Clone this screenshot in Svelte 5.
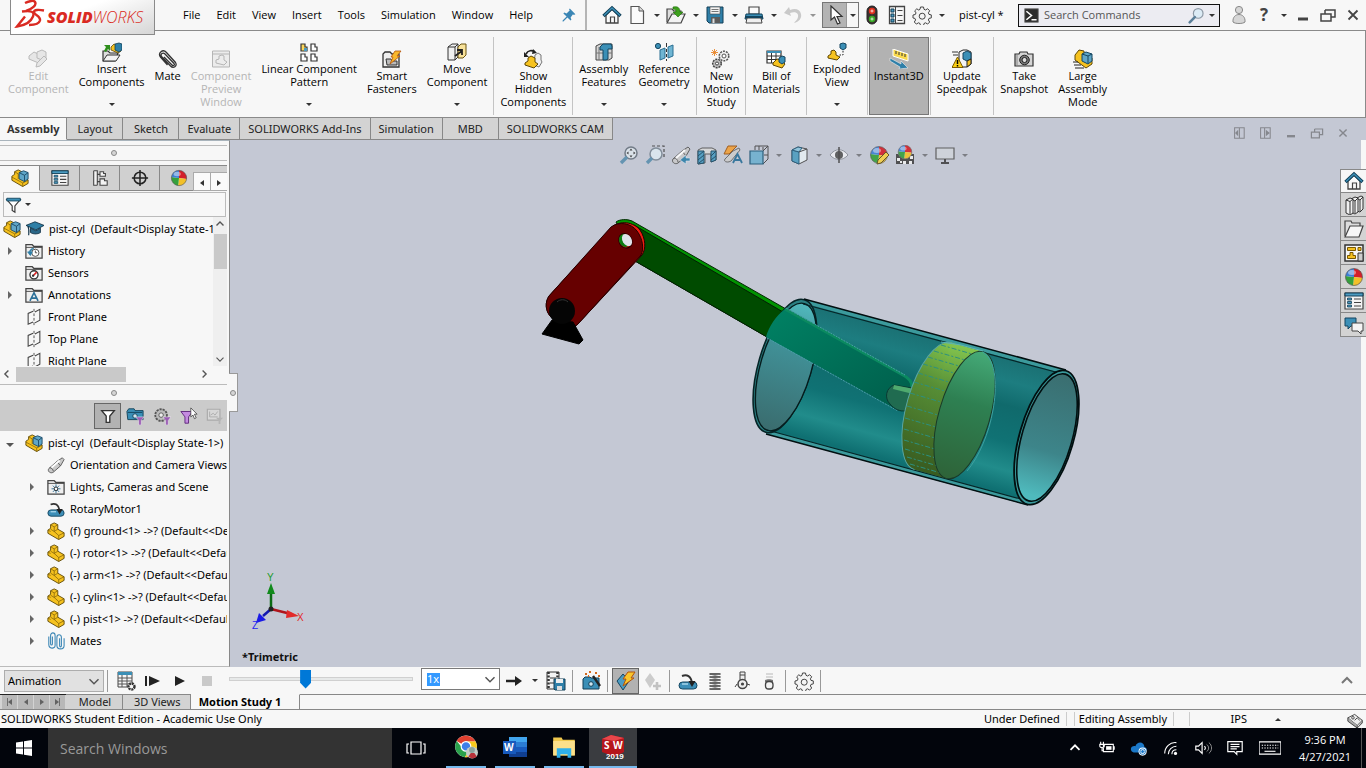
<script>
    // Inner markup of every icon, drawn on a 20 x 20 grid
    const cube = '<path d="M9 4l5-2 5 2v7l-4 3-6-3z" fill="#5fa6c8" stroke="#1b4a66"/><path d="M9 4l6 3 4-3M15 7v7" fill="none" stroke="#1b4a66"/>';
    const bracket = '<path d="M4 3l4-2 4 2v5l7 4v4l-6 3.500-12-7V9l3-2z" fill="#f6c21f" stroke="#5e4704"/><path d="M4 3l4 2.500L12 3M8 5.500v5l-4-2.500M1 9l3 1.500M8 10.500l5 4.500 6-3M13 15v4.500M8 10.500l4-2.500" fill="none" stroke="#7d5f08" stroke-width=".8"/>';
    const assembly = '<path d="M1 8l3-2V3l4-2 4 2v6l7 3v4l-6 3.500-12-7z" fill="#f6c21f" stroke="#5e4704"/><path d="M1 9l12 6.500 6-3M13 15.500v4M4 3l4 2.500V11" fill="none" stroke="#7d5f08" stroke-width=".8"/>' + cube;
    const funnel = '<path d="M2 4h15l-6 7v7l-3-2v-5z" fill="#fff" stroke="#3a3a3a" stroke-width="1.3"/>';
    const folder = '<path d="M1 18V3h7l2 2h9v13z" fill="#efefef" stroke="#444" stroke-width="1.4"/><path d="M1 6h18" stroke="#444"/>';
    const gearPath = '<path d="M8.5 2h3l.5 2.3 1.6.7 2-1.3 2.1 2.1-1.3 2 .6 1.600 2.300.5v3l-2.300.5-.6 1.600 1.300 2-2.100 2.100-2-1.300-1.600.7-.5 2.300h-3l-.5-2.300-1.600-.7-2 1.300-2.100-2.100 1.300-2-.7-1.600L1 13v-3l2.300-.5.7-1.600-1.300-2 2.100-2.100 2 1.300L8 4.300z"';
    const ball = '<circle cx="10" cy="10" r="8.500" fill="#e8e8e8"/><path d="M10 10V1.500A8.500 8.500 0 0 1 18.500 11z" fill="#d3202a"/><path d="M10 10l8.500 1A8.500 8.500 0 0 1 9 18.500z" fill="#f2c029"/><path d="M10 10l-1 8.500A8.500 8.500 0 0 1 1.500 9z" fill="#35a03c"/><path d="M10 10L1.500 9A8.500 8.500 0 0 1 10 1.500z" fill="#3d7fd6"/><ellipse cx="8" cy="5.500" rx="4" ry="2.500" fill="#fff" opacity=".45"/><circle cx="10" cy="10" r="8.500" fill="none" stroke="#555" stroke-width=".7"/>';
    const camera = '<path d="M1 5l2-3h6l1 2h9v10H2z" fill="#3a8fb7" stroke="#123f57"/><path d="M2 6h16" stroke="#123f57"/><circle cx="10" cy="10" r="2.500" fill="#cfe6f0" stroke="#123f57"/>';
    const miniFunnel = '<path d="M11 11h9l-3 4v5h-3v-5z" fill="#9a5cb4" stroke="#eee" stroke-width=".6"/>';
    const gear = gearPath + ' fill="#f4f4f4" stroke="#444"/><circle cx="10.200" cy="11.200" r="3" fill="none" stroke="#444"/>';
    const flashlight = '<path d="M2 14L11 6l6-4 2 2-4 7-8 7c-3 2-7-1-5-4z" fill="#c9c9c9" stroke="#555"/><path d="M11 6l4 5M3 13c2 0 4 2 4 4" stroke="#555" fill="none"/><path d="M5 13l9-8" stroke="#fff" stroke-width="2"/>';
    const disk = '<path d="M2 2h16v16H4l-2-2z" fill="#2f7fa8" stroke="#123f57"/><path d="M5 2h10v7H5z" fill="#f3f3f3" stroke="#444" stroke-width=".6"/><path d="M6.500 4.500h7M6.500 6.500h7" stroke="#777"/><path d="M6 12h9v6H6z" fill="#5b5b5b"/><path d="M7.500 13.500h2V18h-2z" fill="#ddd"/>';
    const bolt = '<path d="M12 1h7l-4 6h3L7 15l3-7H7z" fill="#f9c62c" stroke="#b45309"/>';
    const house = '<path d="M4 10v8h12v-8l-6-6z" fill="#fafafa" stroke="#444" stroke-width="1.300"/><path d="M8.500 18v-6h4v6" fill="none" stroke="#444" stroke-width="1.200"/><path d="M1.500 11L10 3l8.500 8" fill="none" stroke="#123f57" stroke-width="3.400"/><path d="M2 10.500L10 3l8 7.500" fill="none" stroke="#3b8fb6" stroke-width="1.400"/>';
    const bins = '<path d="M1 2h18v16H1z" fill="#f4f4f4" stroke="#444" stroke-width="1.200"/><path d="M1 2h18v3H1z" fill="#4c9cc2" stroke="#123f57"/><path d="M3.500 7h4v2h-4zM3.500 10.500h4v2h-4zM3.500 14h4v2h-4z" fill="#4c9cc2" stroke="#123f57" stroke-width=".8"/><path d="M10 8h7M10 11.500h7M10 15h7" stroke="#444" stroke-width="1.200"/>';
    const motor = '<rect x="1" y="11" width="18" height="7" rx="3.500" fill="#3d8fb8" stroke="#14455f"/><path d="M4 13h6" stroke="#9fd0e6" stroke-width="1.600"/><path d="M4 5c5-2 9 0 10 7" fill="none" stroke="#333" stroke-width="2"/><path d="M10.500 10h7l-3.500 6z" fill="#222"/>';
    const plane = '<path d="M9 3.500L3.500 6v12L9 15.500M11 4.500l5.500-3v12l-5.500 3" fill="none" stroke="#444" stroke-width="1.200"/><path d="M10 1v3M10 6v3M10 11v3M10 16v3" stroke="#444"/>';
    const prompt = '<path d="M2 2h16v16H2z" fill="#2c2c2c" stroke="#777"/><path d="M4 5l6 5-6 5M10 15h6" fill="none" stroke="#fff" stroke-width="1.800"/>';

    const icons = {
        part: bracket,
        assembly,
        gear,
        ball,
        motor,
        plane,
        prompt,
        house,
        bins,
        disk,
        flashlight,
        filter: '<path d="M3 4h14l-5 6v7H8v-7z" fill="#fff" stroke="#333" stroke-width="1.500"/>',
        filterBlue: funnel + '<path d="M2 2.500h15v3H2z" fill="#3b8fb6" stroke="#14455f"/>',
        pin: '<path d="M11 2l7 7-2 1-1-1-3 4 1 3-1 1-4-4-5 5-1 0 0-1 5-5-4-4 1-1 3 1 4-4-1-1z" fill="#3b86b5"/>',
        page: '<path d="M4 1.500h8l4.500 4.500v12.500H4z" fill="#fafafa" stroke="#555" stroke-width="1.200"/><path d="M12 1.500V6h4.500" fill="#ddd" stroke="#555"/>',
        open: '<path d="M1 17V4h5l2 2h7v4" fill="#ddd" stroke="#444" stroke-width="1.200"/><path d="M1 18L6 9h13l-4 9z" fill="#f3f3f3" stroke="#444" stroke-width="1.200"/><path d="M7 2c5-1 7 1 7 5h3l-5 5-5-5h3c0-2-1-3-3-3z" fill="#3ea01e" stroke="#1f6d08" stroke-width=".6"/>',
        print: '<path d="M5 2h10v7H5z" fill="#fafafa" stroke="#444" stroke-width="1.200"/><path d="M2 9h16l1 5H1z" fill="#3b8fb6" stroke="#14455f"/><path d="M3 13h14l1 5H2z" fill="#f0f0f0" stroke="#444"/><path d="M1 12h18" stroke="#14455f" stroke-width="2"/>',
        undo: '<path d="M6 2L1 8l7 3-1-3c5-2 9 0 8 4-.5 3-3 4-4 6 5-1 8-5 7-9C17 4 12 3 7 5z" fill="#c9c9c9"/>',
        cursor: '<path d="M6 1v14l3.500-3 3 7 2.500-1-3-6.500h5z" fill="#fff" stroke="#333" stroke-width="1.200"/>',
        traffic: '<rect x="5" y="1" width="10" height="18" rx="5" fill="#3a3030" stroke="#222"/><circle cx="10" cy="6" r="3.200" fill="#e0301e"/><circle cx="10" cy="14" r="3.200" fill="#38a825"/><path d="M8.500 6h3M10 4.500v3M8.500 14h3M10 12.500v3" stroke="#fff" opacity=".8"/>',
        list: '<path d="M2.500 1.500h15v17h-15z" fill="#f6f6f6" stroke="#444" stroke-width="1.300"/><path d="M8.500 2v16" stroke="#444"/><path d="M4 4h3v3H4zM4 9h3v3H4zM4 14h3v3H4z" fill="#4c9cc2" stroke="#123f57"/><path d="M10.500 5.500h5M10.500 10.500h5M10.500 15.500h5" stroke="#444"/>',
        search: '<circle cx="12" cy="7.500" r="5.700" fill="#dcebf5" stroke="#8d99a5" stroke-width="1.400"/><path d="M8 12l-6 6" stroke="#5b7f99" stroke-width="3" stroke-linecap="round"/>',
        user: '<circle cx="10" cy="5" r="3.600" fill="#d6d6d6" stroke="#888"/><path d="M4 17c-1-10 13-10 12 0-2 2-10 2-12 0z" fill="#d6d6d6" stroke="#888"/>',
        minimise: '<path d="M5 12.500h10v3H5z" fill="currentColor"/>',
        restore: '<path d="M7 5h10v7h-4M3 9h10v7H3zM7 5v4" fill="none" stroke="currentColor" stroke-width="1.500"/>',
        close: '<path d="M5.500 5.500l9 9M14.500 5.500l-9 9" stroke="currentColor" stroke-width="1.800"/>',
        editComponent: '<g fill="#e6e6e6" stroke="#b9b9b9"><path d="M1 7l5-4 4 2v3l7 3-4 4-12-5z"/><path d="M9 3l5-2 4 2v6l-4 2-5-2z"/><path d="M8 18l1-4 7-7 3 3-7 7z"/></g>',
        insertComponents: '<path d="M1 19V9h5l2 2h8l-3 8z" fill="#ddd" stroke="#333" stroke-width="1.200"/><path d="M1 19l4-6h13l-4 6z" fill="#f3f3f3" stroke="#333"/><path d="M2 9l2-4-2-2h6v6L6 7l-2 3z" fill="#2f8f1c"/><path d="M9 5l3-3 3 1v4l4 2-3 2-7-3z" fill="#f6c21f" stroke="#5e4704" stroke-width=".8"/><path d="M13 2l4-1 3 1v6l-3 2-4-2z" fill="#2e7fa6" stroke="#123f57" stroke-width=".8"/>',
        mate: '<path d="M6 8l8 8c1.500 1.500 3 0 2-1.500L7 5C5 3 2 5 3.500 7.500l9 9.500c3 3 7 0 5-3.500L8 3C5-.5-.5 4 2.500 8l7 8" fill="none" stroke="#333" stroke-width="1.300"/>',
        preview: '<g fill="#ececec" stroke="#b5b5b5"><path d="M1.500 2h17v16h-17z"/><path d="M1.500 5h17" /><path d="M5 11l3-1V7l3-1 2 1v4l3 2-3 3-8-2z"/></g>',
        linear: '<g fill="#fff" stroke="#333" stroke-width="1.200"><path d="M2 2h4v3h2v4H2z" fill="#fbd75c"/><path d="M12 2h4v3h2v4h-6zM2 12h4v3h2v4H2zM12 12h4v3h2v4h-6z"/></g><path d="M5 6h3v3H5z" fill="#4c9cc2"/>',
        fasteners: '<path d="M1 18V5l2-2h5l2 2h7v13z" fill="#eee" stroke="#333" stroke-width="1.300"/><path d="M4 10h5l1 2h5v4H5z" fill="#bbb" stroke="#333"/><path d="M13 2h6l-4 5h3L8 15l3-7H9z" fill="#f9b82c" stroke="#b4530a" stroke-width=".8"/>',
        move: '<path d="M1 5l4-3h6v13l-3 3H1z" fill="#f0f0f0" stroke="#333"/><path d="M1 5h7v13M8 5l3-3" fill="none" stroke="#333"/><path d="M11 5l3-3h5v11l-3 3h-5z" fill="#f8e29a" stroke="#6b5410"/><path d="M8 14l7-5M15 13V8h-5" fill="none" stroke="#222" stroke-width="1.800"/>',
        showHidden: '<path d="M12 6l3-2 3 2v5l1 2-3 5-5-2z" fill="#eee" stroke="#777"/><path d="M2 14l3-2V9l3-2 4 2v4l3 2-4 4-9-3z" fill="#f6c21f" stroke="#5e4704"/><path d="M3 5c2-4 6-4 9-2" fill="none" stroke="#222" stroke-width="1.700"/><path d="M1 3v5h5zM10 0l4 4-5 1z" fill="#222"/>',
        features: '<path d="M2 4l4-2h12v14l-3 2H2z" fill="#d5d5d5" stroke="#444"/><path d="M2 11h16M5 5v13" stroke="#777"/><path d="M6 5l3-3h8l1 2v3h-4v10l-2 1H9V8H6z" fill="#3b8fb6" stroke="#14455f"/>',
        geometry: '<circle cx="4" cy="4" r="2.600" fill="#3b8fb6" stroke="#14455f"/><path d="M6 8l5-2v10l-5 2zM14 5l5-2v11l-5 2z" fill="#6fb5d3" stroke="#2a6f92"/><path d="M12.500 1v4M12.500 7v3M12.500 12v3M12.500 17v2" stroke="#333"/>',
        motion: '<circle cx="13" cy="7" r="4.800" fill="#eee" stroke="#555" stroke-width="1.500" stroke-dasharray="2 1"/><circle cx="13" cy="7" r="2" fill="#fff" stroke="#555"/><circle cx="6" cy="14.500" r="4.300" fill="#bbb" stroke="#444" stroke-width="1.500" stroke-dasharray="2 1"/><circle cx="6" cy="14.500" r="1.500" fill="#fff" stroke="#444"/><path d="M3.500 0v7M0 3.500h7M1 1l5 5M6 1L1 6" stroke="#e8862a" stroke-width=".9"/>',
        bom: '<path d="M1 2h14v12H1z" fill="#fff" stroke="#333" stroke-width="1.200"/><path d="M1 2h14v2H1z" fill="#3b8fb6"/><path d="M1 7h14M1 10.500h14M5.500 4v10M10 4v10" stroke="#333"/><path d="M7 14l4-4 4 1 4 4-3 4-9-3z" fill="#f6c21f" stroke="#5e4704"/><path d="M13 9l3-2 3 1v5l-3 2-3-2z" fill="#3b8fb6" stroke="#14455f"/>',
        exploded: '<path d="M1 14l3-2v-3l3-1 2 2v3l4 2-3 3-9-2z" fill="#f6c21f" stroke="#5e4704"/><path d="M13 2l3-1 3 1v4l-3 2-3-2z" fill="#3b8fb6" stroke="#14455f"/><path d="M16 9v4h-4" fill="none" stroke="#222" stroke-dasharray="1.500 1.500"/>',
        instant: '<path d="M4 0l15 5v7L4 7z" fill="#f9d94e" stroke="#fff"/><path d="M7 2v3M10 3v3M13 4v3M16 5v3" stroke="#333"/><path d="M1 9l11 6v-3l7 7-9 1 1-2L1 12z" fill="#2f7fa8" stroke="#fff" stroke-width=".5"/>',
        speedpak: '<path d="M7 3l4-2h4l4 2v12l-4 3H7z" fill="#f3f3f3" stroke="#222"/><path d="M11 4l4-2 4 2v6l-4 2-4-2z" fill="#3b8fb6" stroke="#14455f"/><path d="M15 12l4-2v5l-4 3z" fill="#f6c21f" stroke="#222"/><path d="M0 3h6M1 6h5" stroke="#333"/><path d="M5.500 8L11 18.500H0z" fill="#fbd014" stroke="#7a5900"/><path d="M5.500 11v4M5.500 16v1.500" stroke="#000" stroke-width="1.500"/>',
        snapshot: '<path d="M1 5h4l1-2h7l1 2h5v12H1z" fill="#d5d5d5" stroke="#333" stroke-width="1.200"/><path d="M3 6v10" stroke="#888"/><circle cx="10.500" cy="11" r="4.800" fill="#777" stroke="#222"/><circle cx="10.500" cy="11" r="2.500" fill="#ddd" stroke="#222"/>',
        large: '<path d="M2 6l4-5 5 1v5l8 2v6l-6 4L2 11z" fill="#f6c21f" stroke="#5e4704"/><path d="M9 5l4-2 6 2v7l-4 3-6-3z" fill="#5fa6c8" stroke="#14455f"/><path d="M9 5l6 2 4-2M15 7v7" fill="none" stroke="#14455f"/><path d="M0 13h5M1 16h7M2 19h9" stroke="#222"/>',
        config: '<g fill="#f4f4f4" stroke="#444" stroke-width="1.200"><path d="M3 2h4v16M3 2v16h4M7 6h5M7 14h4"/><path d="M10 3h4v2h2v3h-6zM10 11h5v2h3v5h-8z"/></g>',
        target: '<circle cx="10" cy="10" r="6.500" fill="none" stroke="#222" stroke-width="1.700"/><path d="M10 1v18M1 10h18" stroke="#222" stroke-width="1.700"/>',
        cap: '<path d="M0 6l10-4 10 4-9 5z" fill="#2e7fa6" stroke="#14354a"/><path d="M5 9l6 3 5-3v5c-3 2-8 2-11 0z" fill="#2a6788" stroke="#14354a"/><path d="M2 7c2 3 1 7 1 10" fill="none" stroke="#14354a" stroke-width="1.300"/>',
        history: folder + '<circle cx="11.500" cy="12" r="4" fill="#fff" stroke="#444"/><path d="M11.500 9.500V12h2" stroke="#444" fill="none"/><path d="M5 12c0-4 3-5 5-5M3 11h5l-2 4z" fill="#2f7fa8" stroke="#2f7fa8"/>',
        sensors: folder + '<circle cx="10" cy="12" r="4.500" fill="#fff" stroke="#333" stroke-width="1.500"/><path d="M9 13l4-4" stroke="#d22" stroke-width="1.800"/><circle cx="9" cy="13" r="1.300" fill="#333"/>',
        annotations: folder + '<path d="M5.500 16.500L10 7.500l4.500 9M7 13.500h6" fill="none" stroke="#2a6f98" stroke-width="1.800"/>',
        lights: folder + '<path d="M10 7v10M5 12h10M6.500 8.500l7 7M13.500 8.500l-7 7" stroke="#2a6f98"/><circle cx="10" cy="12" r="2" fill="#fff" stroke="#222"/>',
        filterAnimated: camera + miniFunnel,
        filterDriving: '<circle cx="9" cy="9" r="6.500" fill="#bbb" stroke="#555" stroke-width="2" stroke-dasharray="2.500 1"/><circle cx="9" cy="9" r="2.500" fill="#eee" stroke="#555"/>' + miniFunnel,
        filterSelected: '<path d="M1 5h13l-4.500 6v7h-4v-7z" fill="#c48be0" stroke="#5a2378"/><path d="M12 1v10l2.500-2 1.500 4 2-1-2-4h3z" fill="#fff" stroke="#333" stroke-width=".8"/>',
        filterResults: '<path d="M1.500 2.500h14v12h-14z" fill="#d8d8d8" stroke="#aaa" stroke-width="1.300"/><path d="M4 5v6h9M5 9l3-2 2 2 3-4" fill="none" stroke="#aaa"/><path d="M11 12h8l-3 3v4h-2v-4z" fill="#b5b5b5"/>',
        mates: '<path d="M6 5v8c0 2-2 2-2 0V4c0-4 5-4 5 0v11c0 4-7 4-7-1V5M14 7v8c0 2 2 2 2 0V6c0-4-5-4-5 0v9c0 5 8 5 8 0V7" fill="none" stroke="#3b86b5" stroke-width="1.200"/>',
        calc: '<path d="M2 1h14v15H2z" fill="#f6f6f6" stroke="#444"/><path d="M2 1h14v3H2z" fill="#3b8fb6"/><path d="M2 7h14M2 10h14M2 13h14M6 4v12M11 4v12" stroke="#555"/><circle cx="15.500" cy="15.500" r="3" fill="#f7f7f7" stroke="#333" stroke-width="2.400" stroke-dasharray="2 .8"/>',
        playStart: '<path d="M3 5v10" stroke="#222" stroke-width="2"/><path d="M6 5l11 5-11 5z" fill="#222"/>',
        play: '<path d="M5 5l10 5-10 5z" fill="#222"/>',
        stop: '<path d="M5 5h10v10H5z" fill="#c9c9c9"/>',
        arrowRight: '<path d="M2 10h10" stroke="#222" stroke-width="2.500"/><path d="M11 5l7 5-7 5z" fill="#222"/>',
        film: '<path d="M1 1h12v17H1z" fill="#f3f3f3" stroke="#333"/><path d="M2.500 1v17M11.500 1v17" stroke="#333" stroke-width="2.500" stroke-dasharray="2 1.500"/><path d="M4 7h6M4 12h6" stroke="#333"/><path d="M8 8h11v11H9l-1-1z" fill="#2f7fa8" stroke="#123f57"/><path d="M10 8h7v4h-7z" fill="#eee"/><path d="M11 15h5v4h-5z" fill="#ddd"/>',
        wizard: '<path d="M2 8l2-2h5l1 1h8v11H2z" fill="#3a8fb7" stroke="#123f57"/><circle cx="10" cy="13" r="2.300" fill="#cfe6f0" stroke="#123f57"/><path d="M12 5l7 10" stroke="#222" stroke-width="2.400"/><path d="M4 3h2M8 1h2M14 2h2M17 5h2M7 5h1" stroke="#d2691e" stroke-width="1.800"/>',
        autokey: '<path d="M7 3l6 7-6 9-6-9z" fill="#4c9cc2" stroke="#14455f"/>' + bolt,
        addKey: '<path d="M7 2l5 7-5 8-5-8z" fill="#ccc"/><path d="M14 11v8M10 15h8" stroke="#c2c2c2" stroke-width="2.600"/>',
        spring: '<path d="M5 3h10M5 6h10M5 9h10M5 12h10M5 15h10M5 18h10" stroke="#333" stroke-width="1.500" stroke-linecap="round"/><path d="M15 3L5 6M15 6L5 9M15 9L5 12M15 12L5 15M15 15L5 18" stroke="#777" stroke-width=".8"/>',
        contact: '<path d="M8 1h5v8H8z" fill="#eee" stroke="#444"/><path d="M8 4h5" stroke="#444"/><circle cx="10.500" cy="13" r="4.500" fill="#eee" stroke="#444" stroke-width="1.500"/><circle cx="10.500" cy="13" r="1.600" fill="#444"/><path d="M5 13l-2 3M15 13l3 1" stroke="#444"/>',
        gravity: '<path d="M7 3h7M7 6h7" stroke="#d8d8d8" stroke-width="2"/><path d="M6 9c2-1 6-1 8 0v2H6z" fill="#777"/><rect x="6.500" y="10.500" width="7.500" height="7.500" rx="3" fill="#f3f3f3" stroke="#444" stroke-width="1.300"/>',
        chevronDown: '<path d="M5 8l5 5 5-5" fill="none" stroke="currentColor" stroke-width="1.600"/>',
        chevronUp: '<path d="M5 12l5-5 5 5" fill="none" stroke="currentColor" stroke-width="2"/>',
        chevronLeft: '<path d="M12 5l-5 5 5 5" fill="none" stroke="currentColor" stroke-width="2"/>',
        chevronRight: '<path d="M8 5l5 5-5 5" fill="none" stroke="currentColor" stroke-width="2"/>',
        zoomFit: '<circle cx="12" cy="8" r="6" fill="#dde5ec" stroke="#6b7580" stroke-width="1.500"/><path d="M12 3.500l1.500 2h-3zM12 12.500l1.500-2h-3zM7.500 8l2-1.500v3zM16.500 8l-2-1.500v3z" fill="#333"/><path d="M8 12l-6 6" stroke="#5b8fae" stroke-width="3.400"/>',
        zoomArea: '<path d="M7 1h12v13" fill="none" stroke="#444" stroke-width="1.200" stroke-dasharray="3 2"/><circle cx="11" cy="9" r="6" fill="#dce9f0" stroke="#7b8894" stroke-width="1.500"/><path d="M7 13l-5 5" stroke="#5b8fae" stroke-width="3.400"/>',
        previous: flashlight + '<path d="M19 13h-4v-3l-6 5 6 4v-3h4z" fill="#2f7fa8" stroke="#dfe6ee" stroke-width=".6"/>',
        section: '<path d="M1 5l4-2h10l4 2v10l-5 2V9H8v9l-7 1z" fill="#d9d9d9" stroke="#555"/><path d="M1 6h6v12l-6 1zM14 6h5v9l-5 2z" fill="#4c9cc2" stroke="#14455f"/><path d="M1 11l6-5M1 15l6-5M2 18l5-4M14 11l5-5M14 15l5-4" stroke="#14455f"/>',
        dynamic: '<path d="M5 1h9L6 9H1z" fill="#f1a13a" stroke="#9c5510"/><path d="M2 14L10 6l6-3 1 2-9 11c-3 2-8 1-6-2z" fill="#ccc" stroke="#666"/><path d="M10 18l4.500-9 4.500 9M12 15h5" fill="none" stroke="#2a6f98" stroke-width="1.800"/>',
        viewCube: '<path d="M6 1h13v13M19 1l-5 5M6 1v4M10 1v4M14 2v3M15 10h4M19 14l-5 5" fill="none" stroke="#444"/><path d="M1 6h13v13H1z" fill="#6fb0cf" stroke="#1d5575" stroke-width="1.200"/>',
        display: '<path d="M3 5l6-3 9 2v11l-8 4-7-3z" fill="#e6eef2" stroke="#444"/><path d="M3 5l7 2v12l-7-3z" fill="#4f9dc0" stroke="#1d5575"/><path d="M3 5l6-3 4 1-3 4z" fill="#8cc4dc" stroke="#1d5575"/><path d="M10 7l8-3" stroke="#444"/>',
        eye: '<path d="M1 10c5-7 13-7 18 0-5 6-13 6-18 0z" fill="#eceef2" stroke="#8a8f98"/><circle cx="10" cy="10" r="4" fill="#555"/><path d="M10 2v16" stroke="#444" stroke-width="1.500"/>',
        editBall: ball + '<path d="M8 19l1-4 8-8 3 3-8 8z" fill="#f4cf45" stroke="#5a4a1a"/>',
        sceneBall: '<path d="M1 9h18v10H1z" fill="#444"/><path d="M2 13h3v3H2zM8 16h3v3H8zM14 16h3v3h-3zM15 11h3v3h-3zM5 16h2v2H5z" fill="#eee"/><g transform="translate(2 -1) scale(.8)">' + ball + '</g>',
        monitor: '<path d="M1 3h18v11H1z" fill="#d0d4da" stroke="#555" stroke-width="1.200"/><path d="M10 14v3M6 18h8" stroke="#444" stroke-width="2"/>',
        paneLeft: '<path d="M4.500 3.500h12v13h-12zM10.500 4v12" fill="none" stroke="currentColor" stroke-width="1.300"/><path d="M9 6v8l-4-4z" fill="currentColor"/>',
        paneRight: '<path d="M4.500 3.500h12v13h-12zM9.500 4v12" fill="none" stroke="currentColor" stroke-width="1.300"/><path d="M11 6v8l5-4z" fill="currentColor"/>',
        library: '<g fill="#f0f0f0" stroke="#333"><path d="M13 3l4-2 2 1v12l-3 3-3-1z"/><path d="M7 4l4-2 3 1v14l-3 2-4-2z"/><path d="M2 5l4-2 3 1v14l-3 2-4-2z"/></g><path d="M2 5l4 1.500V19M9 4L6 6.500M9 5l2 1v12M14 3l-3 3M14 4l2 1v11M19 2l-3 3" fill="none" stroke="#333"/>',
        folderOpen: '<path d="M1 17V2h6l1 2h8v4" fill="#ddd" stroke="#444" stroke-width="1.200"/><path d="M1 18L6 7h13l-4 11z" fill="#f6f6f6" stroke="#444" stroke-width="1.200"/>',
        palette: '<path d="M1 2h18v16H1z" fill="#f6f6f6" stroke="#333" stroke-width="1.500"/><path d="M3.500 4.500h8v3h-8zM14 4.500h3v3h-3zM6 9.500h3v3h2.500v3h-8v-3H6z" fill="#f4c020" stroke="#7a5900"/><path d="M14 10h5v8h-5z" fill="#ccc" stroke="#333"/>',
        forum: '<path d="M1 3h11v8H7l-3 3v-3H1z" fill="#3b8fb6" stroke="#14455f"/><path d="M8 8h11v8h-2v3l-3-3H8z" fill="#f4f4f4" stroke="#444"/>',
        tag: '<path d="M1 8l8-4 9 7-6 6z" fill="#eee" stroke="#333"/><path d="M1 8v4l11 8v-3M12 20l6-6v-3" fill="#aaa" stroke="#333"/><circle cx="7" cy="8" r="1.500" fill="#fff" stroke="#333"/><path d="M9 11l3-3 3 3" fill="none" stroke="#333"/>',
        windows: '<path d="M2 4.500l7-1v6H2zM10 3.300L18 2v7.500h-8zM2 10.500h7v6l-7-1zM10 10.500h8V18l-8-1.200z" fill="#fff"/>',
        taskView: '<path d="M5 4h10v12H5zM3 6H1v9h2M17 6h2v9h-2" fill="none" stroke="#fff" stroke-width="1.200"/>',
        chrome: '<circle cx="10" cy="9.500" r="9" fill="#fff"/><path d="M10 9.500L2.200 5A9 9 0 0 1 18 5.500h-8z" fill="#e0402f"/><path d="M10 9.500h-4L2.200 5A9 9 0 0 0 9 18.500l4-6z" fill="#2aa14c"/><path d="M10 5.500h8A9 9 0 0 1 9 18.500l4-6z" fill="#f8c91c"/><circle cx="10" cy="9.500" r="4" fill="#3f7fe8" stroke="#fff"/><circle cx="15" cy="14.500" r="5" fill="#c5ccc8"/><circle cx="15" cy="12.500" r="2.400" fill="#8aa39d"/><path d="M12 18l2-3h3l2 3c-2 2-5 2-7 0z" fill="#b8323a"/>',
        folderYellow: '<path d="M1 2h7l1 2h10v13H1z" fill="#f0c94e"/><path d="M1 5h18v12H1z" fill="#fce08a"/><path d="M4 19v-8h12v8h-3v-3H7v3z" fill="#2fb0ea"/>',
        battery: '<path d="M6 6h11v8H6zM18 8v4M3 3v3M6 3v3M2 6h5v2c0 2-5 2-5 0zM4.500 9v4h2" fill="none" stroke="#fff" stroke-width="1.200"/><path d="M9 8h6v4H9z" fill="#fff"/>',
        onedrive: '<path d="M2 14c-3-4 1-7 4-6 2-6 10-5 10 1 4 1 3 6 0 6H4z" fill="#1b78c8"/><circle cx="14" cy="14" r="4.500" fill="#fff"/><circle cx="14" cy="14" r="3.500" fill="#1b78c8"/><path d="M12 14a2 2 0 0 1 4-.5M16 14a2 2 0 0 1-4 .5" fill="none" stroke="#fff"/>',
        wifi: '<g fill="none" stroke="#fff" stroke-width="1.200"><path d="M3 16C3 9 9 3 16 4M7 17c0-5 4-9 9-9M11 17c0-3 2-5 5-5"/></g><circle cx="15" cy="16" r="1.800" fill="#fff"/>',
        sound: '<path d="M2 8h3l4-4v12l-4-4H2zM11.500 8c1.500 1 1.500 3 0 4" fill="none" stroke="#fff" stroke-width="1.300"/><path d="M14 6c3 2 3 6 0 8M16.500 4c4 3 4 9 0 12" fill="none" stroke="#999"/>',
        message: '<path d="M2 3h16v11h-6v3l-3-3H2zM5 6h10M5 8.500h10M5 11h7" fill="none" stroke="#fff" stroke-width="1.300"/>',
        keyboard: '<path d="M0 4.500h20v11H0z" fill="none" stroke="#fff" stroke-width="1.200"/><path d="M2.500 7.500h15M2.500 10h15" stroke="#fff" stroke-dasharray="1.200 1.200"/><path d="M5 13h10" stroke="#fff"/>',
    };

    const menus = ["File", "Edit", "View", "Insert", "Tools", "Simulation", "Window", "Help"];

    const quickTools = [
        { icon: "page", label: "New" },
        { icon: "open", label: "Open" },
        { icon: "disk", label: "Save" },
        { icon: "print", label: "Print" },
        { icon: "undo", label: "Undo", disabled: true },
    ];

    const ribbon = [
        [
            { icon: "editComponent", lines: ["Edit", "Component"], disabled: true },
            { icon: "insertComponents", lines: ["Insert", "Components"], menu: true },
            { icon: "mate", lines: ["Mate"] },
            { icon: "preview", lines: ["Component", "Preview", "Window"], disabled: true },
            { icon: "linear", lines: ["Linear Component", "Pattern"], menu: true },
            { icon: "fasteners", lines: ["Smart", "Fasteners"] },
            { icon: "move", lines: ["Move", "Component"], menu: true },
        ],
        [{ icon: "showHidden", lines: ["Show", "Hidden", "Components"] }],
        [
            { icon: "features", lines: ["Assembly", "Features"], menu: true },
            { icon: "geometry", lines: ["Reference", "Geometry"], menu: true },
        ],
        [{ icon: "motion", lines: ["New", "Motion", "Study"] }],
        [{ icon: "bom", lines: ["Bill of", "Materials"] }],
        [{ icon: "exploded", lines: ["Exploded", "View"], menu: true }],
        [{ icon: "instant", lines: ["Instant3D"], pressed: true }],
        [{ icon: "speedpak", lines: ["Update", "Speedpak"] }],
        [
            { icon: "snapshot", lines: ["Take", "Snapshot"] },
            { icon: "large", lines: ["Large", "Assembly", "Mode"] },
        ],
    ];

    const tabs = ["Assembly", "Layout", "Sketch", "Evaluate", "SOLIDWORKS Add-Ins", "Simulation", "MBD", "SOLIDWORKS CAM"];

    const viewTools = [
        { icon: "zoomFit", label: "Zoom to Fit" },
        { icon: "zoomArea", label: "Zoom to Area" },
        { icon: "previous", label: "Previous View" },
        { icon: "section", label: "Section View" },
        { icon: "dynamic", label: "Dynamic Annotation Views" },
        { icon: "viewCube", label: "View Orientation", menu: true },
        { icon: "display", label: "Display Style", menu: true },
        { icon: "eye", label: "Hide/Show Items", menu: true },
        { icon: "editBall", label: "Edit Appearance" },
        { icon: "sceneBall", label: "Apply Scene", menu: true },
        { icon: "monitor", label: "View Settings", menu: true },
    ];

    const panelTabs = ["assembly", "bins", "config", "target", "ball"];
    const taskPane = ["house", "library", "folderOpen", "palette", "ball", "bins", "forum"];

    const features = [
        { icon: "history", text: "History", closed: true },
        { icon: "sensors", text: "Sensors" },
        { icon: "annotations", text: "Annotations", closed: true },
        { icon: "plane", text: "Front Plane" },
        { icon: "plane", text: "Top Plane" },
        { icon: "plane", text: "Right Plane" },
    ];

    const motionFilters = ["filter", "filterAnimated", "filterDriving", "filterSelected", "filterResults"];

    const motionTree = [
        { icon: "flashlight", text: "Orientation and Camera Views" },
        { icon: "lights", text: "Lights, Cameras and Scene", closed: true },
        { icon: "motor", text: "RotaryMotor1" },
        { icon: "part", text: "(f) ground<1> ->? (Default<<Default>", closed: true },
        { icon: "part", text: "(-) rotor<1> ->? (Default<<Default>", closed: true },
        { icon: "part", text: "(-) arm<1> ->? (Default<<Default>", closed: true },
        { icon: "part", text: "(-) cylin<1> ->? (Default<<Default>", closed: true },
        { icon: "part", text: "(-) pist<1> ->? (Default<<Default>", closed: true },
        { icon: "mates", text: "Mates", closed: true },
    ];

    const tray = ["chevronUp", "battery", "onedrive", "wifi", "sound", "message", "keyboard"];

    // Facet lines along the side of the piston, as points on its rim
    const facets = [
        [939, 345], [932, 351], [926, 357], [921, 364], [916, 373], [912, 382], [908, 393],
        [905, 406], [903, 418], [902, 429], [902, 440], [903, 449], [905, 457], [908, 464],
    ];

    let position = 41;
    let speed = "1x";
</script>

{#snippet icon(name)}
    <svg class="icon" viewBox="0 0 20 20" aria-hidden="true">{@html icons[name]}</svg>
{/snippet}

<div class="app">
    <header class="titlebar">
        <div class="logo">
            <svg viewBox="0 0 34 30" aria-hidden="true">
                <path d="M12 3c4-2 9-3 10-1 2 3-3 7-9 9" />
                <path d="M9 11.500c9-1 13 0 11 5-2 5-8 9-16 10l8-10" />
                <path d="M31 10.500c-5-1-10-1-10 1.500 0 3 7 4 6 8.500-1 4-6 4.500-11 4.500" />
            </svg>
            <strong>SOLID</strong><span>WORKS</span>
        </div>
        <nav class="menus">
            {#each menus as menu}
                <button>{menu}</button>
            {/each}
            <button class="pin" aria-label="Keep menu open">{@render icon("pin")}</button>
        </nav>
        <div class="quick">
            <button class="tool home" aria-label="Home">{@render icon("house")}</button>
            {#each quickTools as tool}
                <button class="tool" aria-label={tool.label}>{@render icon(tool.icon)}</button>
                <button class="drop" class:faded={tool.disabled} aria-label="{tool.label} options"><i class="caret"></i></button>
            {/each}
            <div class="select-tool">
                <button class="on" aria-label="Select">{@render icon("cursor")}</button>
                <button class="more" aria-label="Select options"><i class="caret"></i></button>
            </div>
            <button class="tool rebuild" aria-label="Rebuild">{@render icon("traffic")}</button>
            <button class="tool spaced" aria-label="File Properties">{@render icon("list")}</button>
            <button class="tool spaced" aria-label="Options">{@render icon("gear")}</button>
            <button class="drop" aria-label="Options list"><i class="caret"></i></button>
        </div>
        <span class="doc">pist-cyl *</span>
        <label class="command-search">
            {@render icon("prompt")}
            <input type="text" placeholder="Search Commands" />
            {@render icon("search")}
            <i class="caret"></i>
        </label>
        <div class="window-tools">
            <button class="tool" aria-label="Login">{@render icon("user")}</button>
            <button class="tool spaced help">?</button>
            <button class="drop" aria-label="Help options"><i class="caret"></i></button>
            <button class="tool" aria-label="Minimise">{@render icon("minimise")}</button>
            <button class="tool spaced" aria-label="Restore">{@render icon("restore")}</button>
            <button class="tool spaced" aria-label="Close">{@render icon("close")}</button>
        </div>
    </header>

    <section class="ribbon">
        {#each ribbon as group}
            <div class="group">
                {#each group as tool}
                    <button class:menu={tool.menu} class:pressed={tool.pressed} disabled={tool.disabled}>
                        {@render icon(tool.icon)}
                        {#each tool.lines as line}
                            <span>{line}</span>
                        {/each}
                        {#if tool.menu}<i class="caret"></i>{/if}
                    </button>
                {/each}
            </div>
        {/each}
    </section>

    <div class="tabbar">
        {#each tabs as tab, i}
            <button class="tab" class:active={i === 0}>{tab}</button>
        {/each}
        <div class="doc-tools">
            {#each ["paneLeft", "paneRight", "minimise", "restore", "close"] as name}
                <button aria-label={name}>{@render icon(name)}</button>
            {/each}
        </div>
    </div>

    <main>
        <aside>
            <div class="grip"><i></i></div>
            <div class="panel-tabs">
                {#each panelTabs as name, i}
                    <button class:active={i === 0} aria-label={name}>{@render icon(name)}</button>
                {/each}
                <div class="spin">
                    <button aria-label="Previous tab"><i class="caret left"></i></button>
                    <button aria-label="Next tab"><i class="caret right"></i></button>
                </div>
            </div>
            <button class="filter" aria-label="Filter">
                {@render icon("filterBlue")}<i class="caret"></i>
            </button>
            <div class="feature-tree">
                <ul>
                    <li class="root">{@render icon("assembly")}{@render icon("cap")}<span>pist-cyl  (Default&lt;Display State-1&gt;)</span></li>
                    {#each features as item}
                        <li>
                            <button class="toggle" aria-label="Expand {item.text}">{#if item.closed}<i class="caret right"></i>{/if}</button>
                            {@render icon(item.icon)}<span>{item.text}</span>
                        </li>
                    {/each}
                </ul>
                <div class="vscroll">
                    {@render icon("chevronUp")}
                    <i class="thumb"></i>
                    {@render icon("chevronDown")}
                </div>
            </div>
            <div class="hscroll">
                {@render icon("chevronLeft")}
                <i class="thumb"></i>
                {@render icon("chevronRight")}
            </div>
            <div class="grip lower"><i></i></div>
            <div class="motion-filters">
                {#each motionFilters as name, i}
                    <button class:on={i === 0} aria-label={name}>{@render icon(name)}</button>
                {/each}
            </div>
            <ul class="motion-tree">
                <li class="root">
                    <button class="toggle" aria-label="Collapse pist-cyl"><i class="caret wide"></i></button>
                    {@render icon("assembly")}<span>pist-cyl  (Default&lt;Display State-1&gt;)</span>
                </li>
                {#each motionTree as item}
                    <li>
                        <button class="toggle" aria-label="Expand {item.text}">{#if item.closed}<i class="caret right"></i>{/if}</button>
                        {@render icon(item.icon)}<span>{item.text}</span>
                    </li>
                {/each}
            </ul>
        </aside>

        <section class="viewport">
            <svg class="scene" viewBox="230 140 1131 527" role="img" aria-label="Piston and cylinder assembly">
                <defs>
                    <linearGradient id="body" gradientUnits="userSpaceOnUse" x1="935" y1="335" x2="898" y2="470">
                        <stop offset="0" stop-color="#1a6f72" />
                        <stop offset="0.180" stop-color="#1d7d80" />
                        <stop offset="0.350" stop-color="#106a6c" />
                        <stop offset="0.600" stop-color="#107274" />
                        <stop offset="0.800" stop-color="#218c8b" />
                        <stop offset="0.950" stop-color="#0f7072" />
                    </linearGradient>
                    <linearGradient id="mouth" x1="0" y1="0" x2="0" y2="1">
                        <stop offset="0" stop-color="#51b9bd" />
                        <stop offset="0.300" stop-color="#41939a" />
                        <stop offset="1" stop-color="#3a6c6e" />
                    </linearGradient>
                    <linearGradient id="bore" x1="0" y1="0" x2="0" y2="1">
                        <stop offset="0" stop-color="#3a6e70" />
                        <stop offset="0.600" stop-color="#3d858a" />
                        <stop offset="0.950" stop-color="#4fbabd" />
                    </linearGradient>
                    <linearGradient id="side" gradientUnits="userSpaceOnUse" x1="960" y1="343" x2="928" y2="476">
                        <stop offset="0" stop-color="#86c850" />
                        <stop offset="0.350" stop-color="#578f36" />
                        <stop offset="1" stop-color="#37591f" />
                    </linearGradient>
                    <linearGradient id="crown" x1="0" y1="0" x2="0" y2="1">
                        <stop offset="0" stop-color="#45aa78" />
                        <stop offset="0.400" stop-color="#2e8052" />
                        <stop offset="1" stop-color="#2e6338" />
                    </linearGradient>
                    <linearGradient id="rod" x1="0" y1="0" x2="1" y2="1">
                        <stop offset="0" stop-color="#008264" />
                        <stop offset="1" stop-color="#005c4a" />
                    </linearGradient>
                </defs>

                <!-- connecting arm outside the cylinder -->
                <path d="M616 222c4-3 11-3 16-1l154 88-19 28-132-76z" fill="#009300" stroke="#032803" />
                <path d="M634 225l149 87-16 25-132-76z" fill="#004b00" stroke="#021f02" />

                <!-- crank -->
                <path d="M549 296l63-69c8-7 22-5 28 3 6 9 6 19 2 25l-65 70c-5 3-17 0-26-8-6-6-6-15-2-21z" fill="#ee1c12" stroke="#250000" />
                <path d="M549 296l62-69c8-6 20-4 26 4 6 8 7 18 4 24l-64 70c-5 3-17 0-26-8-6-6-6-15-2-21z" fill="#660000" stroke="#250000" />
                <ellipse cx="625.500" cy="241" rx="6.500" ry="7.500" transform="rotate(-30 625 241)" fill="#c31a12" stroke="#200" />
                <path d="M619 240c0-5 4-7 7-5l4 10-4 2c-4 0-7-4-7-7z" fill="#0b7d12" />
                <ellipse cx="627" cy="240" rx="4.500" ry="6.500" transform="rotate(-30 627 240)" fill="#dfe3ea" />

                <!-- fixed motor mount -->
                <path d="M552 320l-10 14 37 10 4-4-10-18z" fill="#000" stroke="#000" />
                <circle cx="562" cy="311" r="13" fill="#050505" />
                <path d="M557 302c3-3 8-3 11 0" fill="none" stroke="#333" />

                <!-- cylinder shell -->
                <path d="M804 299L1066 370 1027 505 766 434z" fill="url(#body)" />
                <path d="M804 299L1066 370 1065 374 803 303zM766 434L1027 505 1028 501 767 430z" fill="#3c9a9c" />
                <ellipse cx="785" cy="366" rx="26.500" ry="69" transform="rotate(16.200 785 366)" fill="#2b8083" stroke="#062527" stroke-width="1.600" />
                <ellipse cx="786" cy="367" rx="25.500" ry="66" transform="rotate(16.200 786 367)" fill="url(#mouth)" stroke="#061c1d" stroke-width="1.400" />
                <path d="M803 304l260 70M767 430l261 71" stroke="#052527" stroke-width="1.200" />

                <!-- arm inside the cylinder -->
                <path d="M785 309l120 67c8 5 11 12 8 20-3 11-7 17-14 15l-133-74c3-11 10-21 19-28z" fill="url(#rod)" />
                <path d="M785 309l118 66c6 3 9 8 9 12" fill="none" stroke="#0b8a60" stroke-width="3" />
                <path d="M786 308l119 67M767 338l131 73" fill="none" stroke="#4b9da8" stroke-dasharray="2 1" />
                <path d="M894 385c-8 3-10 13-4 19 5 6 10 7 15 7l8-18-1-5z" fill="#206b50" stroke="#0a3a33" />
                <path d="M894 385l20 4-1 5-20-5z" fill="#4faa6e" />

                <!-- piston -->
                <ellipse cx="932.500" cy="406" rx="25.500" ry="66" transform="rotate(16.200 932.500 406)" fill="url(#side)" stroke="#5aa5a0" />
                <path d="M950.800 342.600l32 9-36.600 126.800-32-9z" fill="url(#side)" />
                {#each facets as [x, y]}
                    <path d="M{x + 2} {y}l31 9" stroke="#2c9080" stroke-dasharray="5 2 2 2" />
                {/each}
                <ellipse cx="964.500" cy="415" rx="25.500" ry="66" transform="rotate(16.200 964.500 415)" fill="url(#crown)" stroke="#1a3a28" />
                <path d="M983 352c14 9 14 36 10 58-4 23-14 47-26 61" fill="none" stroke="#3ea0a0" />
                <path d="M941 342l20 3 22 6" fill="none" stroke="#5ab3b6" />

                <!-- open end and outline -->
                <ellipse cx="1046.500" cy="437.500" rx="27" ry="69.500" transform="rotate(16.200 1046.500 437.500)" fill="#3a9a9c" stroke="#020f10" stroke-width="1.800" />
                <ellipse cx="1047" cy="437.500" rx="25" ry="66" transform="rotate(16.200 1047 437.500)" fill="url(#bore)" stroke="#020f10" stroke-width="1.600" />
                <path d="M804 299l262 71M766 434l262 71" stroke="#020f10" stroke-width="1.600" />

                <!-- orientation triad -->
                <g fill="none" stroke-width="2.500">
                    <path d="M271 609v-18" stroke="#0c6b14" />
                    <path d="M271 609l20 5" stroke="#b0141c" />
                    <path d="M271 609l-8 7" stroke="#1418b0" />
                </g>
                <path d="M271 583l-4 11h8z" fill="#118a1c" />
                <path d="M299 616l-12-6-1 8z" fill="#e22a2a" />
                <path d="M256 623l3-10 7 7z" fill="#1a1ae6" />
                <circle cx="271" cy="609" r="2.500" fill="#222" />
                <g class="axis">
                    <text x="267" y="581" fill="#1d9a28">Y</text>
                    <text x="297" y="621" fill="#e22a2a">X</text>
                    <text x="252" y="629" fill="#2424f0">Z</text>
                </g>
            </svg>

            <div class="heads-up">
                {#each viewTools as tool}
                    <button aria-label={tool.label}>{@render icon(tool.icon)}</button>
                    {#if tool.menu}<button class="view-drop" aria-label="{tool.label} options"><i class="caret"></i></button>{/if}
                {/each}
            </div>
            <button class="handle" aria-label="Collapse panel"><i></i></button>
            <span class="view-name">*Trimetric</span>
            <nav class="task-pane">
                {#each taskPane as name, i}
                    <button class:active={i === 0} aria-label={name}>{@render icon(name)}</button>
                {/each}
            </nav>
        </section>
    </main>

    <section class="motion">
        <div class="motion-bar">
            <label class="combo study">
                <select aria-label="Type of study"><option>Animation</option></select>
                {@render icon("chevronDown")}
            </label>
            <i class="rule"></i>
            <button aria-label="Calculate">{@render icon("calc")}</button>
            <button aria-label="Play from start">{@render icon("playStart")}</button>
            <button aria-label="Play">{@render icon("play")}</button>
            <button aria-label="Stop">{@render icon("stop")}</button>
            <input class="time" type="range" aria-label="Time" bind:value={position} />
            <label class="combo speed">
                <input type="text" aria-label="Playback speed" bind:value={speed} />
                {@render icon("chevronDown")}
            </label>
            <button aria-label="Playback mode">{@render icon("arrowRight")}</button>
            <button class="narrow" aria-label="Playback mode options"><i class="caret"></i></button>
            <button aria-label="Save animation">{@render icon("film")}</button>
            <i class="rule"></i>
            <button aria-label="Animation wizard">{@render icon("wizard")}</button>
            <i class="rule"></i>
            <button class="on" aria-label="Autokey">{@render icon("autokey")}</button>
            <button aria-label="Add key">{@render icon("addKey")}</button>
            <i class="rule"></i>
            <button aria-label="Motor">{@render icon("motor")}</button>
            <button aria-label="Spring">{@render icon("spring")}</button>
            <button aria-label="Contact">{@render icon("contact")}</button>
            <button aria-label="Gravity">{@render icon("gravity")}</button>
            <i class="rule"></i>
            <button aria-label="Motion study properties">{@render icon("gear")}</button>
            <i class="rule"></i>
            <button class="expand" aria-label="Expand">{@render icon("chevronUp")}</button>
        </div>
        <div class="sheet-tabs">
            <div class="sheet-nav">
                <button aria-label="First"><i class="bar"></i><i class="caret left"></i></button>
                <button aria-label="Previous"><i class="caret left"></i></button>
                <button aria-label="Next"><i class="caret right"></i></button>
                <button aria-label="Last"><i class="caret right"></i><i class="bar"></i></button>
            </div>
            <button class="sheet">Model</button>
            <button class="sheet">3D Views</button>
            <button class="sheet active">Motion Study 1</button>
            <div class="sheet-rest"></div>
        </div>
    </section>

    <footer class="status">
        <span>SOLIDWORKS Student Edition - Academic Use Only</span>
        <span class="defined">Under Defined</span>
        <span class="editing">Editing Assembly</span>
        <button class="units">IPS <i class="caret up"></i></button>
        <button class="tags" aria-label="Tags">{@render icon("tag")}</button>
    </footer>

    <div class="taskbar">
        <button class="start" aria-label="Start">{@render icon("windows")}</button>
        <input type="text" aria-label="Search Windows" placeholder="Search Windows" />
        <button class="task-view" aria-label="Task View">{@render icon("taskView")}</button>
        <button class="task" aria-label="Chrome">{@render icon("chrome")}</button>
        <button class="task" aria-label="Word">
            <svg class="icon" viewBox="0 0 24 22" aria-hidden="true">
                <path d="M6 1h18v5H6z" fill="#41a5ee" /><path d="M6 6h18v5H6z" fill="#2b7cd3" />
                <path d="M6 11h18v5H6z" fill="#185abd" /><path d="M6 16h18v5H6z" fill="#103f91" />
                <path d="M0 5h13v13H0z" fill="#185abd" />
                <text x="1" y="15" fill="#fff" font-size="10" font-weight="700">W</text>
            </svg>
        </button>
        <button class="task" aria-label="File Explorer">{@render icon("folderYellow")}</button>
        <button class="task current" aria-label="SOLIDWORKS 2019">
            <svg class="icon" viewBox="0 0 24 24" aria-hidden="true">
                <path d="M1 4l9-4 13 3v14l-9 5L1 17z" fill="#b5161c" /><path d="M1 4l9-4 13 3-10 3z" fill="#e8464a" />
                <text x="3" y="14" fill="#fff" font-size="10" font-weight="700">S</text>
                <text x="12" y="14" fill="#fff" font-size="10" font-weight="700">W</text>
                <text class="year" x="5" y="24" fill="#fff" font-size="8" font-weight="700">2019</text>
            </svg>
        </button>
        <div class="tray">
            {#each tray as name}
                <button aria-label={name}>{@render icon(name)}</button>
            {/each}
            <time class="clock"><span>9:36 PM</span><span>4/27/2021</span></time>
        </div>
    </div>
</div>

<style>
    :global(body) {
        margin: 0;
        overflow: hidden;
    }
    .app {
        display: flex;
        flex-direction: column;
        height: 100vh;
        background: #f7f7f7;
        color: #000;
        font: 11px/14px "Open Sans", "Noto Sans", sans-serif;
    }
    .tabbar,
    aside,
    .motion,
    .status {
        font-family: "Noto Sans", "Open Sans", sans-serif;
    }
    button,
    input,
    select {
        margin: 0;
        padding: 0;
        border: 0;
        border-radius: 0;
        background: none;
        color: inherit;
        font: inherit;
        white-space: nowrap;
    }
    input,
    select {
        min-width: 0;
        outline: 0;
    }
    ul {
        margin: 0;
        padding: 0;
        list-style: none;
    }
    .icon {
        display: block;
        flex: none;
        width: 20px;
        height: 20px;
    }
    .caret {
        display: inline-block;
        border: 3px solid transparent;
        border-top-color: #333;
        border-bottom: 0;
    }
    .caret.right {
        border: 3px solid transparent;
        border-left: 4px solid #333;
        border-right: 0;
    }
    .caret.left {
        border: 3px solid transparent;
        border-right: 4px solid #333;
        border-left: 0;
    }
    .caret.up {
        border: 3px solid transparent;
        border-bottom-color: #333;
        border-top: 0;
    }
    .caret.wide {
        border-width: 4px 4px 0;
        border-top-color: #555;
    }
    li .caret.right {
        border-width: 4px 0 4px 4px;
        border-left-color: #666;
    }

    /* Title bar */
    .titlebar {
        display: flex;
        align-items: center;
        height: 30px;
        border-bottom: 1px solid #8a8a8a;
    }
    .logo {
        display: flex;
        align-items: center;
        align-self: flex-start;
        position: relative;
        z-index: 1;
        box-sizing: border-box;
        width: 145px;
        height: 35px;
        margin-left: 10px;
        padding-left: 2px;
        border: 1px solid #8a8a8a;
        border-top: 0;
        background: linear-gradient(160deg, #fff, #fff 40%, #d6d6d6);
        color: #da2a22;
        font-size: 16px;
        font-style: italic;
        line-height: 36px;
    }
    .logo svg {
        align-self: flex-start;
        width: 34px;
        height: 30px;
        fill: none;
        stroke: #da2a22;
        stroke-width: 2.4;
    }
    .logo strong {
        font-weight: 800;
    }
    .logo span {
        font-weight: 300;
    }
    .menus {
        display: flex;
        align-items: center;
        gap: 16px;
        width: 402px;
        height: 30px;
        margin-left: 28px;
        border-right: 2px solid #b5b5b5;
    }
    .menus .pin {
        margin-left: 12px;
    }
    .pin .icon {
        width: 16px;
        height: 16px;
    }
    .quick,
    .window-tools {
        display: flex;
        align-items: center;
    }
    .quick {
        margin-left: 15px;
    }
    .home {
        margin-right: 5px;
    }
    .tool {
        width: 20px;
        height: 20px;
    }
    .spaced {
        margin-left: 5px;
    }
    .drop {
        display: grid;
        place-items: center;
        width: 19px;
        height: 20px;
    }
    .faded {
        opacity: 0.5;
    }
    .select-tool {
        display: flex;
        border: 1px solid #777;
    }
    .select-tool button {
        display: grid;
        place-items: center;
        height: 24px;
    }
    .select-tool .on {
        width: 24px;
        border: 0;
        border-right: 1px solid #999;
        background: #b4b4b4;
    }
    .select-tool .more {
        width: 11px;
    }
    .rebuild {
        margin-left: 3px;
    }
    .doc {
        margin-left: 8px;
        white-space: nowrap;
    }
    .command-search {
        display: flex;
        align-items: center;
        gap: 4px;
        box-sizing: border-box;
        width: 202px;
        height: 23px;
        margin-left: auto;
        padding: 0 4px;
        border: 1px solid #111;
        background: #ececf2;
    }
    .command-search .icon {
        width: 17px;
        height: 17px;
    }
    .command-search input {
        flex: 1;
    }
    .command-search input::placeholder {
        color: #555;
        opacity: 1;
    }
    .window-tools {
        margin: 0 3px 0 9px;
        color: #444;
    }
    .help {
        font-size: 17px;
        font-weight: 700;
    }

    /* Command ribbon */
    .ribbon {
        display: flex;
        align-items: stretch;
        box-sizing: border-box;
        height: 87px;
        padding: 6px 0 2px 3px;
        border-right: 1px solid #8a8a8a;
        border-bottom: 1px solid #8a8a8a;
    }
    .group {
        display: flex;
    }
    .group + .group::before {
        content: "";
        width: 1px;
        margin: 0 1px;
        background: #c4c4c4;
    }
    .group button {
        display: flex;
        flex-direction: column;
        align-items: center;
        box-sizing: border-box;
        padding: 12px 5px 0;
        line-height: 13px;
    }
    .group button.menu {
        padding-top: 5px;
    }
    .group button:disabled {
        color: #b5b5b5;
    }
    .group button.pressed {
        padding: 11px 4px 0;
        border: 1px solid #777;
        background: #b2b2b2;
    }
    .group .caret {
        margin: auto 0 9px;
    }

    /* Command tabs */
    .tabbar {
        display: flex;
        height: 22px;
        background: #c4c8d4;
    }
    .tab {
        box-sizing: border-box;
        min-width: 56px;
        padding: 0 8px;
        border-right: 1px solid #888;
        border-bottom: 1px solid #888;
        background: #d3d3d3;
        color: #222;
    }
    .tab.active {
        padding: 0 7px;
        border-bottom-color: #f7f7f7;
        background: #f7f7f7;
        color: #333;
        font-weight: 700;
    }
    .doc-tools {
        display: flex;
        align-items: flex-end;
        gap: 10px;
        margin: 0 15px -1px auto;
        color: #85878d;
    }
    .doc-tools .icon {
        width: 16px;
        height: 16px;
    }

    /* Side panels */
    main {
        display: grid;
        grid-template-columns: 230px 1fr 5px;
        flex: 1;
        min-height: 0;
    }
    aside {
        display: flex;
        flex-direction: column;
        min-height: 0;
        box-sizing: border-box;
        padding-right: 2px;
        border-top: 1px solid #a9b4bc;
        border-right: 1px solid #888;
        border-bottom: 1px solid #bbb;
    }
    .grip {
        display: grid;
        place-items: center;
        height: 14px;
        margin: 4px 0;
        border-top: 1px solid #bbb;
        border-bottom: 1px solid #bbb;
    }
    .grip.lower {
        height: 15px;
        margin: 2px 0 0;
        border-bottom: 0;
    }
    .grip i,
    .handle i {
        width: 4px;
        height: 4px;
        border: 1px solid #888;
        border-radius: 50%;
        background: #d5d5d5;
    }
    .panel-tabs {
        display: flex;
        height: 25px;
        border-top: 1px solid #888;
    }
    .panel-tabs > button {
        display: grid;
        place-items: center;
        box-sizing: border-box;
        width: 40px;
        border-right: 1px solid #888;
        border-bottom: 1px solid #888;
        background: #d0d0d0;
    }
    .panel-tabs > button:nth-child(5) {
        width: 33px;
        padding-left: 5px;
        border-right: 0;
    }
    .panel-tabs > button.active {
        border-bottom-color: #f7f7f7;
        background: #f7f7f7;
    }
    .panel-tabs > button .icon {
        width: 18px;
        height: 18px;
    }
    .spin {
        display: flex;
        flex: 1;
        padding-top: 6px;
        background: #d0d0d0;
    }
    .spin button {
        flex: 1;
        border: 1px solid #aaa;
        border-right: 0;
        background: #fafafa;
        line-height: 8px;
    }
    .filter {
        display: flex;
        align-items: center;
        gap: 2px;
        height: 25px;
        margin: 1px 1px 0 3px;
        padding-left: 1px;
        border: 1px solid #bbb;
    }
    .filter .icon {
        width: 18px;
        height: 18px;
    }
    .feature-tree {
        display: flex;
        height: 149px;
        overflow: hidden;
    }
    .feature-tree ul {
        flex: 1;
        min-width: 0;
        padding-top: 1px;
        overflow: hidden;
    }
    li {
        display: flex;
        align-items: center;
        gap: 5px;
        height: 22px;
        white-space: pre;
    }
    li .icon {
        width: 18px;
        height: 18px;
    }
    li .toggle {
        width: 20px;
        height: 18px;
        flex: none;
        line-height: 8px;
    }
    .feature-tree .root {
        padding-left: 3px;
    }
    .vscroll {
        display: flex;
        flex-direction: column;
        align-items: center;
        width: 14px;
        background: #efefef;
        color: #555;
    }
    .vscroll .icon,
    .hscroll .icon {
        width: 14px;
        height: 14px;
    }
    .vscroll .thumb {
        width: 13px;
        height: 35px;
        margin: 3px 0 auto;
        background: #c9c9c9;
    }
    .hscroll {
        display: flex;
        align-items: center;
        height: 16px;
        padding-right: 16px;
        color: #555;
    }
    .hscroll .thumb {
        width: 110px;
        height: 15px;
        margin: 0 auto 0 2px;
        background: #c9c9c9;
    }
    .motion-filters {
        display: flex;
        justify-content: flex-end;
        align-items: center;
        height: 31px;
        background: #cbcbcb;
    }
    .motion-filters button {
        display: grid;
        place-items: center;
        box-sizing: border-box;
        width: 27px;
        height: 26px;
    }
    .motion-filters button:last-child {
        width: 25px;
    }
    .on {
        border: 1px solid #666;
        background: #b2b2b2;
    }
    .motion-filters .icon {
        width: 18px;
        height: 18px;
    }
    .motion-tree {
        flex: 1;
        padding-top: 1px;
        overflow: hidden;
    }
    .motion-tree li {
        padding-left: 22px;
    }
    .motion-tree .root {
        padding-left: 0;
    }

    /* Graphics area */
    .viewport {
        position: relative;
        min-height: 0;
        background: #c4c8d4;
    }
    .scene {
        display: block;
        width: 100%;
        height: 100%;
    }
    .axis {
        font: 10px "Liberation Sans", sans-serif;
    }
    .heads-up {
        position: absolute;
        top: 5px;
        left: 0;
        right: 4px;
        display: flex;
        justify-content: center;
    }
    .heads-up button {
        display: grid;
        place-items: center;
        width: 26px;
        height: 20px;
        opacity: 0.9;
    }
    .heads-up .view-drop {
        width: 14px;
        opacity: 0.5;
    }
    .handle {
        position: absolute;
        top: 233px;
        left: -1px;
        display: grid;
        place-items: center;
        width: 9px;
        height: 39px;
        border: 1px solid #999;
        border-left: 0;
        background: #f7f7f7;
    }
    .view-name {
        position: absolute;
        bottom: 3px;
        left: 12px;
        color: #111;
        font-family: "Noto Sans", "Open Sans", sans-serif;
        font-weight: 700;
    }
    .task-pane {
        position: absolute;
        top: 29px;
        right: -5px;
        display: flex;
        flex-direction: column;
        box-sizing: border-box;
        width: 26px;
        border-left: 1px solid #888;
        border-top: 1px solid #888;
    }
    .task-pane button {
        display: grid;
        place-items: center;
        height: 24px;
        box-sizing: border-box;
        border-bottom: 1px solid #888;
        background: #d3d3d3;
    }
    .task-pane button.active {
        height: 23px;
        background: #f7f7f7;
    }

    /* Motion study bar */
    .motion-bar {
        display: flex;
        align-items: center;
        height: 27px;
        padding-left: 4px;
    }
    .motion-bar button {
        display: grid;
        place-items: center;
        box-sizing: border-box;
        width: 27px;
        height: 26px;
    }
    .motion-bar .narrow {
        width: 15px;
    }
    .rule {
        width: 1px;
        height: 22px;
        margin: 0 4px 0 3px;
        background: #999;
    }
    .combo {
        display: flex;
        align-items: center;
        box-sizing: border-box;
        height: 22px;
    }
    .combo .icon {
        width: 18px;
        height: 18px;
        color: #555;
    }
    .study {
        width: 100px;
        border: 1px solid #adadad;
        background: #e1e1e1;
    }
    .study select {
        flex: 1;
        padding-left: 3px;
        appearance: none;
    }
    .time {
        width: 184px;
        height: 20px;
        margin: 0 8px 4px 9px;
        appearance: none;
    }
    .time::-webkit-slider-runnable-track {
        box-sizing: border-box;
        height: 4px;
        border: 1px solid #d0d0d0;
        background: #e7e9e9;
    }
    .time::-webkit-slider-thumb {
        width: 11px;
        height: 19px;
        margin-top: -8px;
        appearance: none;
        background: #0078d7;
        clip-path: polygon(0 0, 100% 0, 100% 70%, 50% 100%, 0 70%);
    }
    .speed {
        justify-content: space-between;
        width: 79px;
        margin-bottom: 3px;
        padding-left: 5px;
        border: 1px solid #7a7a7a;
        background: #fff;
    }
    .speed input {
        width: 13px;
        height: 13px;
        background: #3399ff;
        color: #fff;
    }
    .motion-bar .expand {
        margin: 0 6px 0 auto;
        color: #777;
    }
    .sheet-tabs {
        display: flex;
        height: 15px;
        border-bottom: 1px solid #888;
    }
    .sheet-nav {
        display: flex;
        gap: 1px;
        padding: 0 1px 0 2px;
        background: #d3d3d3;
        border-top: 1px solid #222;
    }
    .sheet-nav button {
        display: flex;
        align-items: center;
        justify-content: center;
        width: 15px;
        background: #adadad;
        opacity: 0.7;
    }
    .bar {
        width: 1px;
        height: 8px;
        background: #444;
    }
    .sheet {
        box-sizing: border-box;
        min-width: 57px;
        padding: 0 9px 0 11px;
        border-top: 1px solid #888;
        border-right: 1px solid #888;
        background: #d3d3d3;
        color: #222;
        line-height: 12px;
    }
    .sheet.active {
        width: 109px;
        padding: 0 16px 0 7px;
        border-top-color: #f7f7f7;
        background: #f7f7f7;
        color: #000;
        font-weight: 700;
    }
    .sheet-rest {
        flex: 1;
        border-top: 1px solid #888;
    }

    /* Status bar */
    .status {
        display: flex;
        align-items: center;
        height: 18px;
        padding: 0 2px 0 1px;
    }
    .status .defined {
        margin-left: auto;
        padding-right: 6px;
        border-right: 1px solid #ccc;
    }
    .status .editing {
        margin-left: 7px;
        padding: 0 6px 0 4px;
        border: 1px solid #ccc;
        border-width: 0 1px;
    }
    .units {
        display: flex;
        align-items: center;
        justify-content: flex-end;
        gap: 28px;
        width: 92px;
        margin-left: 15px;
        border-left: 1px solid #ccc;
    }
    .tags {
        margin-left: 66px;
    }
    .tags .icon {
        width: 17px;
        height: 17px;
    }

    /* Windows taskbar */
    .taskbar {
        display: flex;
        height: 40px;
        background: #02050c;
        color: #fff;
    }
    .taskbar button {
        display: grid;
        place-items: center;
    }
    .start {
        width: 48px;
    }
    .taskbar input {
        box-sizing: border-box;
        width: 344px;
        padding-left: 12px;
        background: #333;
        font-size: 14px;
    }
    .taskbar input::placeholder {
        color: #999;
        opacity: 1;
    }
    .task-view {
        width: 48px;
    }
    .task {
        box-sizing: border-box;
        width: 40px;
        margin-left: 9px;
        border-bottom: 2px solid #76b9ed;
    }
    .task-view + .task {
        margin-left: 6px;
    }
    .task .icon {
        width: 24px;
        height: 24px;
        overflow: visible;
    }
    .year {
        font-family: "Liberation Sans", sans-serif;
    }
    .task.current {
        width: 48px;
        margin-left: 5px;
        background: #3a3c40;
    }
    .tray {
        display: flex;
        margin-left: auto;
        margin-right: 4px;
        border-right: 1px solid #555;
    }
    .tray button {
        width: 32px;
    }
    .tray .icon {
        width: 18px;
        height: 18px;
    }
    .tray button:last-of-type {
        width: 38px;
    }
    .tray button:last-of-type .icon {
        width: 22px;
        height: 22px;
    }
    .clock {
        display: flex;
        flex-direction: column;
        justify-content: center;
        width: 72px;
        line-height: 17px;
        text-align: center;
    }
</style>
